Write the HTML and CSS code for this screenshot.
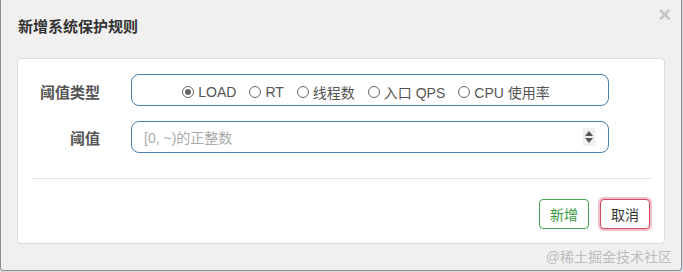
FILE: index.html
```html
<!DOCTYPE html>
<html lang="zh-CN">
<head>
  <meta charset="UTF-8" />
  <title>新增系统保护规则</title>
  <link rel="stylesheet" href="styles.css">
</head>
<body>
  <div class="modal">
    <div class="modal-header">
      <h3 class="modal-title">新增系统保护规则</h3>
      <span class="close">&times;</span>
    </div>

    <div class="panel">
      <div class="form-grid">
        <label class="form-label first">阈值类型</label>
        <div class="field radios">
          <span class="radio checked"><i></i>LOAD</span>
          <span class="radio"><i></i>RT</span>
          <span class="radio"><i></i>线程数</span>
          <span class="radio"><i></i>入口 QPS</span>
          <span class="radio"><i></i>CPU 使用率</span>
        </div>

        <label class="form-label">阈值</label>
        <div class="field number">
          <span class="placeholder">[0, ~)的正整数</span>
          <span class="spinner"><b class="up"></b><b class="down"></b></span>
        </div>
      </div>

      <div class="divider"></div>

      <div class="actions">
        <button class="btn btn-add">新增</button>
        <button class="btn btn-cancel">取消</button>
      </div>
    </div>

    <div class="watermark">@稀土掘金技术社区</div>
  </div>
</body>
</html>
```

FILE: styles.css
```css
body {
  margin: 0;
  background: #d5dbe2;
  font-family: "Liberation Sans", "Noto Sans CJK SC", sans-serif;
  color: #333;
}

.modal {
  box-sizing: border-box;
  width: 682px;
  height: 271px;
  background: #f0f0f0;
  border: 1px solid #8e8e8e;
  border-top: none;
  border-radius: 0 0 4px 4px;
}

.modal-header {
  display: flex;
  justify-content: space-between;
  align-items: flex-start;
  height: 58px;
  padding: 0 10px 0 17px;
}
.modal-title {
  margin: 17px 0 0;
  font-size: 15px;
  line-height: 20px;
  font-weight: bold;
  color: #333;
}
.close {
  margin-top: 3px;
  font-size: 22px;
  line-height: 24px;
  font-weight: bold;
  color: #c6c6c6;
}

.panel {
  margin: 0 16px;
  height: 186px;
  box-sizing: border-box;
  background: #fff;
  border: 1px solid #dcdcdc;
  border-radius: 4px;
  padding-top: 15px;
}

.form-grid {
  display: grid;
  grid-template-columns: 82px 478px;
  column-gap: 31px;
  row-gap: 15px;
}
.form-label {
  align-self: center;
  text-align: right;
  font-size: 15px;
  font-weight: bold;
  color: #555;
}
.form-label.first { padding-top: 3px; }
.field {
  box-sizing: border-box;
  height: 32px;
  border: 1px solid #4a7eae;
  border-radius: 8px;
  font-size: 14px;
  color: #555;
}

.radios {
  display: flex;
  justify-content: center;
  align-items: center;
  gap: 13px;
  padding: 3px 8px 0 0;
}
.radio { display: flex; align-items: center; gap: 4px; }
.radio i {
  box-sizing: border-box;
  width: 12px; height: 12px;
  border: 1px solid #666;
  border-radius: 50%;
  display: flex; align-items: center; justify-content: center;
}
.radio.checked i::after {
  content: "";
  width: 6px; height: 6px;
  border-radius: 50%;
  background: #666;
}

.number {
  display: flex;
  align-items: center;
  justify-content: space-between;
  padding: 0 13px 0 12px;
}
.placeholder { color: #aaa; }
.spinner {
  display: flex;
  flex-direction: column;
  justify-content: center;
  align-items: center;
  gap: 2px;
  width: 12px;
  height: 18px;
  background: #efefef;
}
.spinner b { width: 0; height: 0; border-left: 4px solid transparent; border-right: 4px solid transparent; }
.spinner .up { border-bottom: 5px solid #555; }
.spinner .down { border-top: 5px solid #555; }

.divider {
  height: 1px;
  background: #e3e3e3;
  margin: 25px 13px 0 14px;
}

.actions {
  display: flex;
  justify-content: flex-end;
  align-items: center;
  gap: 11px;
  padding: 20px 14px 0 0;
}
.btn {
  height: 30px;
  padding: 0 10px;
  background: #fff;
  border-radius: 4px;
  font-family: inherit;
  font-size: 14px;
  cursor: pointer;
}
.btn-add { border: 1px solid #4aa54f; color: #3d9a42; }
.btn-cancel {
  border: 1px solid #d24a64;
  color: #333;
  box-shadow: 0 0 0 2px rgba(226, 110, 130, 0.45);
}

.watermark {
  margin-top: 3px;
  padding-right: 9px;
  text-align: right;
  font-size: 14px;
  line-height: 20px;
  color: #bdbdbd;
}
```
